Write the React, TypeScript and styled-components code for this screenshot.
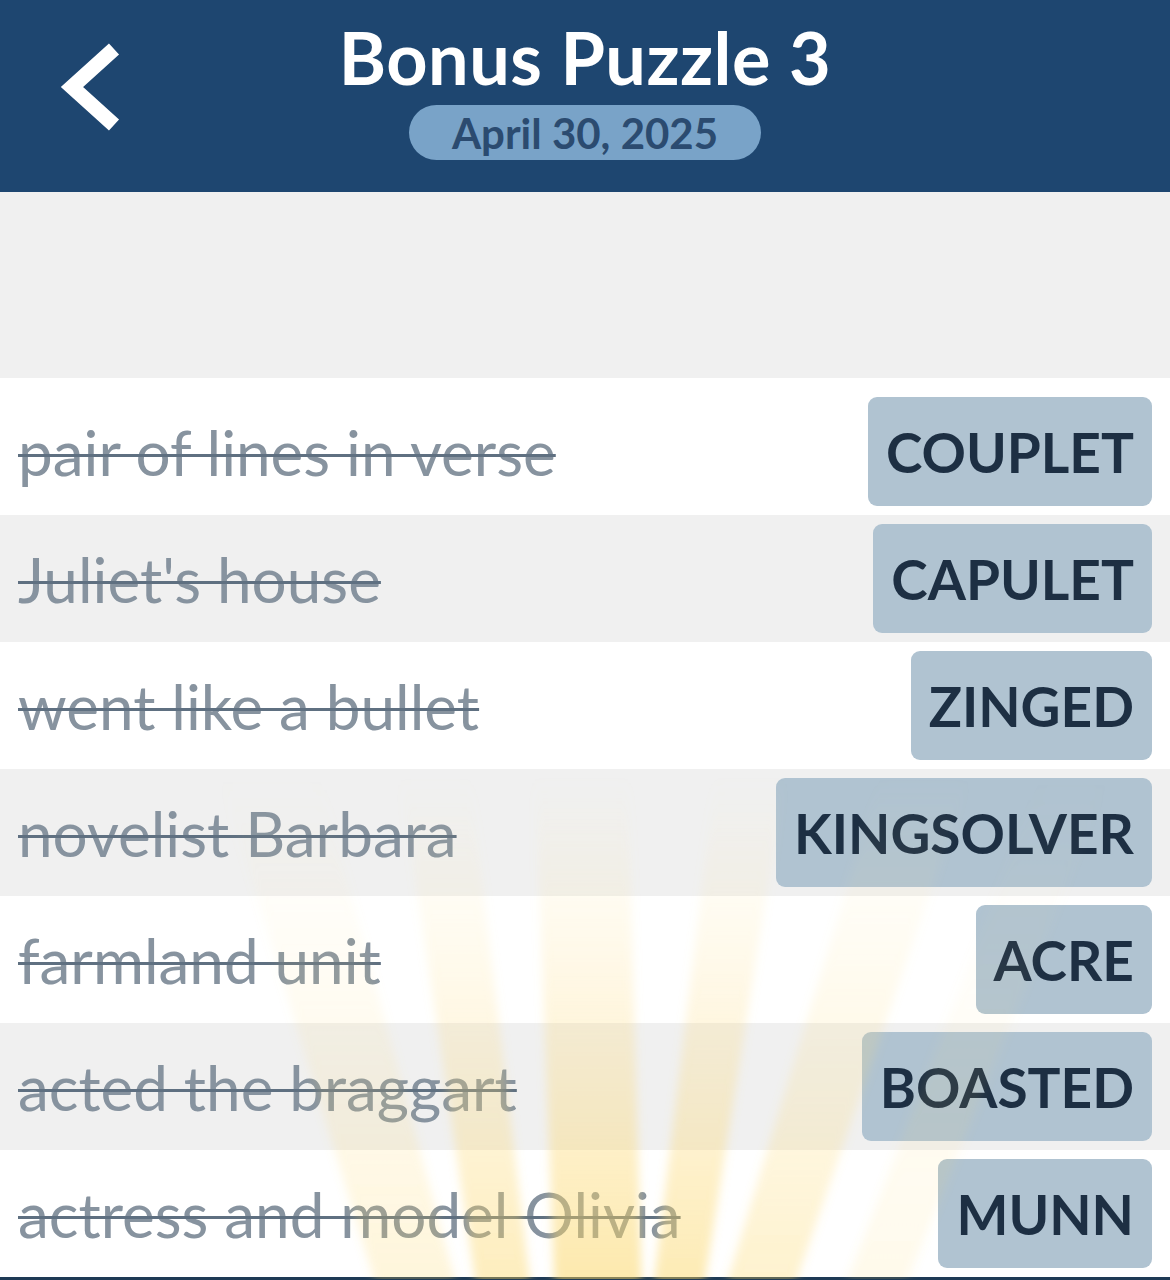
import styled, { createGlobalStyle } from "styled-components";

const GlobalStyle = createGlobalStyle`
  html, body {
    margin: 0;
    padding: 0;
    background: #f0f0f0;
  }
  body {
    font-family: Lato, "Noto Sans", sans-serif;
  }
`;

const Page = styled.div`
  width: 1170px;
  height: 1280px;
  overflow: hidden;
  background: #f0f0f0;
  display: flex;
  flex-direction: column;
`;

const Header = styled.header`
  height: 192px;
  background: #1e4670;
  display: flex;
  align-items: flex-start;
  position: relative;
`;

const BackButton = styled.button`
  position: absolute;
  left: 52px;
  top: 36px;
  width: 80px;
  height: 100px;
  padding: 0;
  border: 0;
  background: transparent;
  cursor: pointer;
`;

const HeaderCenter = styled.div`
  flex: 1;
  display: flex;
  flex-direction: column;
  align-items: center;
  padding-top: 17px;
`;

const Title = styled.h1`
  margin: 0;
  color: #ffffff;
  font-family: Lato, sans-serif;
  font-weight: 700;
  font-size: 72px;
  line-height: 80px;
  letter-spacing: 0.5px;
`;

const DatePill = styled.div`
  margin-top: 8px;
  width: 352px;
  height: 55px;
  border-radius: 28px;
  background: #79a3c8;
  color: #2b4b70;
  display: flex;
  align-items: center;
  justify-content: center;
  font-family: Lato, sans-serif;
  font-weight: 700;
  font-size: 42px;
  line-height: 1;
`;

const Spacer = styled.div`
  height: 187px;
  background: #f0f0f0;
`;

const List = styled.div`
  position: relative;
  flex: 1;
  background: #ffffff;
  padding-top: 10px;
  border-bottom: 3px solid #1e3a55;
`;

const Rays = styled.svg`
  position: absolute;
  left: 0;
  top: 0;
  width: 1170px;
  height: 901px;
  pointer-events: none;
  z-index: 2;
`;

const Row = styled.div<{ $shaded: boolean }>`
  height: 127px;
  display: flex;
  align-items: center;
  justify-content: space-between;
  padding: 0 18px;
  box-sizing: border-box;
  background: ${(p) => (p.$shaded ? "#f0f0f0" : "#ffffff")};
`;

const Clue = styled.span`
  color: #87939f;
  font-family: Lato, sans-serif;
  font-weight: 400;
  font-size: 62px;
  text-decoration: line-through;
  text-decoration-color: #5f7081;
  text-decoration-thickness: 3px;
  white-space: nowrap;
`;

const Answer = styled.div`
  height: 109px;
  padding: 0 18px;
  border-radius: 9px;
  background: #b0c3d1;
  color: #1d2f43;
  display: flex;
  align-items: center;
  font-family: Lato, sans-serif;
  font-weight: 700;
  font-size: 55px;
`;

const clues = [
  { clue: "pair of lines in verse", answer: "COUPLET" },
  { clue: "Juliet's house", answer: "CAPULET" },
  { clue: "went like a bullet", answer: "ZINGED" },
  { clue: "novelist Barbara", answer: "KINGSOLVER" },
  { clue: "farmland unit", answer: "ACRE" },
  { clue: "acted the braggart", answer: "BOASTED" },
  { clue: "actress and model Olivia", answer: "MUNN" },
];

// light beams: x range at the bottom of the list and at the top where they fade out
const rays = [
  { b: [380, 460], t: [220, 320], o: 0.22 },
  { b: [478, 532], t: [400, 470], o: 0.4 },
  { b: [555, 642], t: [535, 628], o: 0.5 },
  { b: [652, 702], t: [715, 785], o: 0.45 },
  { b: [722, 790], t: [880, 970], o: 0.3 },
  { b: [840, 900], t: [1040, 1110], o: 0.12 },
];

const TOP = 400;
const BOTTOM = 901;

const App = () => {
  return (
    <Page>
      <GlobalStyle />
      <Header>
        <BackButton aria-label="Back">
          <svg width="80" height="100" viewBox="0 0 80 100">
            <polyline
              points="62,13 20,51 62,89"
              fill="none"
              stroke="#ffffff"
              strokeWidth="15"
              strokeLinejoin="miter"
            />
          </svg>
        </BackButton>
        <HeaderCenter>
          <Title>Bonus Puzzle 3</Title>
          <DatePill>April 30, 2025</DatePill>
        </HeaderCenter>
      </Header>
      <Spacer />
      <List>
        {clues.map((c, i) => (
          <Row key={c.answer} $shaded={i % 2 === 1}>
            <Clue>{c.clue}</Clue>
            <Answer>{c.answer}</Answer>
          </Row>
        ))}
        <Rays viewBox={`0 0 1170 ${BOTTOM}`}>
          <defs>
            <linearGradient id="fade" gradientUnits="userSpaceOnUse" x1="0" y1={BOTTOM} x2="0" y2={TOP}>
              <stop offset="0" stopColor="#fbd35c" stopOpacity="1" />
              <stop offset="0.5" stopColor="#fcdc7e" stopOpacity="0.55" />
              <stop offset="1" stopColor="#fde7a6" stopOpacity="0" />
            </linearGradient>
            <filter id="soft" x="-20%" y="-20%" width="140%" height="140%">
              <feGaussianBlur stdDeviation="5" />
            </filter>
          </defs>
          <g filter="url(#soft)">
            {rays.map((r) => (
              <polygon
                key={r.b[0]}
                points={`${r.b[0]},${BOTTOM + 20} ${r.b[1]},${BOTTOM + 20} ${r.t[1]},${TOP} ${r.t[0]},${TOP}`}
                fill="url(#fade)"
                opacity={r.o}
              />
            ))}
          </g>
        </Rays>
      </List>
    </Page>
  );
};

export default App;
